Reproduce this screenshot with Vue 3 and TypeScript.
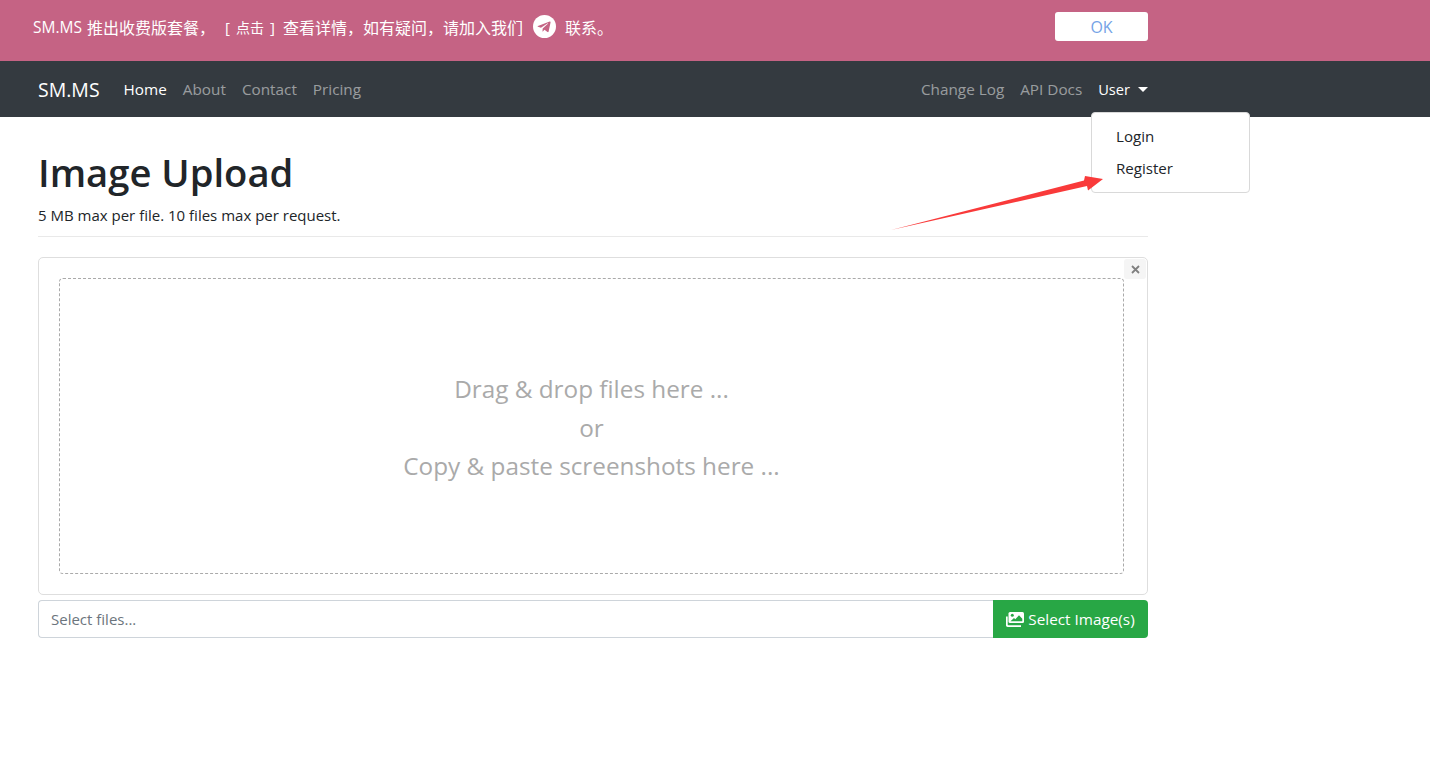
<script setup lang="ts">
const leftLinks: string[] = ['About', 'Contact', 'Pricing'];
const rightLinks: string[] = ['Change Log', 'API Docs'];
</script>

<template>
  <div class="page">
    <div class="banner">
      <div class="banner-text">
        <span class="latin">SM.MS</span>
        <span class="cjk first">推出收费版套餐，</span>
        <span class="click">[<small>点击</small>]</span>
        <span class="cjk">查看详情，如有疑问，请加入我们</span>
        <svg class="tg" width="23" height="23" viewBox="0 0 24 24">
          <circle cx="12" cy="12" r="12" fill="#fff" />
          <path d="M5.2 11.6 17.4 6.800c.6-.2 1.100.1.900.9l-2 9.600c-.2.7-.6.8-1.200.5l-3.100-2.300-1.500 1.500c-.2.2-.3.3-.6.3l.2-3.200 5.700-5.200c.3-.2-.1-.4-.4-.2l-7.100 4.500-3-.9c-.7-.3-.7-.7.1-1z" fill="#c56384" />
        </svg>
        <span class="cjk">联系。</span>
      </div>
      <button class="ok" type="button">OK</button>
    </div>

    <nav class="navbar">
      <div class="nav-left">
        <span class="brand">SM.MS</span>
        <a class="nav-link on">Home</a>
        <a v-for="l in leftLinks" :key="l" class="nav-link">{{ l }}</a>
      </div>
      <div class="nav-right">
        <a v-for="l in rightLinks" :key="l" class="nav-link">{{ l }}</a>
        <a class="nav-link on user">User<i class="caret"></i></a>
        <div class="menu">
          <a class="item">Login</a>
          <a class="item">Register</a>
        </div>
      </div>
    </nav>

    <main class="content">
      <h1>Image Upload</h1>
      <p class="sub">5 MB max per file. 10 files max per request.</p>
      <hr />
      <section class="card">
        <button class="close" type="button">
          <svg width="9" height="9" viewBox="0 0 9 9"><path d="M1 1l7 7M8 1L1 8" stroke="#808080" stroke-width="1.800" /></svg>
        </button>
        <div class="drop">
          <div>Drag &amp; drop files here ...</div>
          <div>or</div>
          <div>Copy &amp; paste screenshots here ...</div>
        </div>
      </section>
      <div class="input-row">
        <div class="field">Select files...</div>
        <button class="select" type="button">
          <svg width="18" height="15" viewBox="0 0 18 15">
            <path d="M4 0h12.500A1.500 1.500 0 0 1 18 1.500v8a1.500 1.500 0 0 1-1.500 1.500H4A1.500 1.500 0 0 1 2.500 9.500v-8A1.500 1.500 0 0 1 4 0z" fill="#fff" />
            <circle cx="6.300" cy="3.300" r="1.500" fill="#28a745" />
            <path d="M4.500 9.200 8 6l1.300 1.200 3.700-4 3.300 3.600v2.400z" fill="#28a745" />
            <path d="M0 4.500v8.800C0 14.200.8 15 1.700 15H15v-1.700H2.400a.7.700 0 0 1-.7-.7V4.500z" fill="#fff" />
          </svg>
          <span>Select Image(s)</span>
        </button>
      </div>
    </main>

    <svg class="arrow" width="220" height="70" viewBox="0 0 220 70">
      <path d="M1 60 L194 10.500 L195 6 L213 9 L198 20.500 L197 16 Z" fill="#f93a3a" />
    </svg>
  </div>
</template>

<style>
html, body { margin: 0; background: #fff; }
</style>

<style scoped>
.page {
  position: relative;
  width: 1430px;
  height: 774px;
  overflow: hidden;
  font-family: "Open Sans", "Noto Sans CJK SC", sans-serif;
  font-size: 15px;
  color: #212529;
}
.banner {
  box-sizing: border-box;
  height: 61px;
  width: 1148px;
  background: #c56384;
  box-shadow: 282px 0 0 #c56384;
  padding: 12px 0 0 33px;
  display: flex;
  justify-content: space-between;
  align-items: flex-start;
}
.banner-text {
  display: flex;
  align-items: center;
  height: 29px;
  color: #fff;
  font-size: 15px;
  white-space: nowrap;
}
.latin { font-size: 15.500px; }
.cjk { font-size: 16px; }
.cjk.first { margin-left: 5px; }
.click { display: flex; align-items: center; gap: 6px; width: 48px; margin: 0 10px; }
.click small { font-size: 14px; }
.tg { margin: 0 9px 0 10px; }
.ok {
  width: 93px;
  height: 29px;
  border: 0;
  padding: 0;
  border-radius: 3px;
  background: #fff;
  color: #75a3e6;
  font: 16px "Open Sans", sans-serif;
}
.navbar {
  box-sizing: border-box;
  height: 56px;
  width: 1148px;
  background: #343a40;
  box-shadow: 282px 0 0 #343a40;
  padding-left: 38px;
  display: flex;
  justify-content: space-between;
  align-items: center;
}
.nav-left, .nav-right { display: flex; align-items: center; }
.nav-right { position: relative; }
.brand { color: #fff; font-size: 19.500px; margin-right: 24px; }
.nav-link { color: rgba(255, 255, 255, 0.5); margin-right: 16px; white-space: nowrap; font-size: 15.300px; }
.nav-link.on { color: #fff; }
.nav-right .nav-link:last-of-type { margin-right: 0; }
.user { display: flex; align-items: center; font-size: 14.600px; }
.caret {
  display: block;
  margin-left: 8px;
  width: 0;
  height: 0;
  border-top: 5px solid #fff;
  border-left: 5px solid transparent;
  border-right: 5px solid transparent;
}
.menu {
  position: absolute;
  top: 33px;
  right: -102px;
  box-sizing: border-box;
  width: 159px;
  height: 81px;
  padding: 8px 0;
  background: #fff;
  border: 1px solid #d9d9d9;
  border-radius: 4px;
  z-index: 2;
}
.item { display: block; height: 32px; line-height: 30px; padding-left: 24px; color: #212529; font-size: 15.100px; }
.content { width: 1110px; margin-left: 38px; padding-top: 28px; }
h1 { margin: 0; font-size: 38.200px; line-height: 54px; font-weight: 600; }
.sub { margin: 4px 0 0; line-height: 24px; font-size: 15px; }
hr { margin: 9px 0 20px; border: 0; border-top: 1px solid #e9e9e9; }
.card {
  position: relative;
  box-sizing: border-box;
  height: 338px;
  padding: 20px 23px 20px 20px;
  border: 1px solid #dedede;
  border-radius: 5px;
}
.close {
  position: absolute;
  top: 1px;
  right: 1px;
  width: 22px;
  height: 20px;
  padding: 0;
  border: 0;
  border-radius: 3px;
  background: #f5f5f5;
  display: flex;
  align-items: center;
  justify-content: center;
}
.drop {
  box-sizing: border-box;
  height: 296px;
  padding-top: 4px;
  border: 1px dashed #aaa;
  border-radius: 4px;
  display: flex;
  flex-direction: column;
  justify-content: center;
  align-items: center;
  color: #aaa;
  font-size: 24.300px;
  line-height: 38.400px;
}
.input-row { display: flex; height: 38px; margin-top: 5px; }
.field {
  flex: 1;
  box-sizing: border-box;
  border: 1px solid #ced4da;
  border-right: 0;
  border-radius: 4px 0 0 4px;
  padding-left: 12px;
  line-height: 36px;
  color: #6c757d;
}
.select {
  width: 155px;
  border: 0;
  padding: 0;
  border-radius: 0 4px 4px 0;
  background: #28a745;
  color: #fff;
  font: 15.300px "Open Sans", sans-serif;
  display: flex;
  align-items: center;
  justify-content: center;
  gap: 4px;
}
.arrow { position: absolute; left: 890px; top: 170px; z-index: 3; }
</style>
